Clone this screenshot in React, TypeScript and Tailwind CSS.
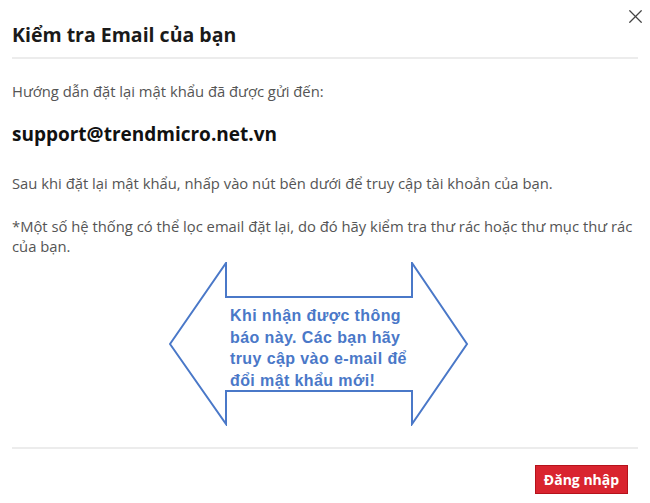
import { X } from "lucide-react";

function ArrowNote() {
    return (
        <div className="relative ml-[169px] mt-[6px] h-[164px] w-[300px]">
            <svg width="300" height="164" viewBox="0 0 300 164" className="block">
                <polygon
                    points="1,82 57,1 57,35 243,35 243,1 298,82 243,162 243,129 57,129 57,162"
                    fill="#ffffff"
                    stroke="#4a78c8"
                    strokeWidth="2"
                    strokeLinejoin="miter"
                />
            </svg>
            {/* callout text sits on top of the drawn arrow */}
            <p className="absolute left-[61px] top-[43px] whitespace-nowrap font-['Liberation_Sans',Arial,sans-serif] text-[16px] font-bold leading-[21.5px] tracking-[0.4px] text-[#4a78c8]">
                Khi nhận được thông
                <br />
                báo này. Các bạn hãy
                <br />
                truy cập vào e-mail để
                <br />
                đổi mật khẩu mới!
            </p>
        </div>
    );
}

export default function App() {
    return (
        <div className="relative h-[503px] w-[650px] bg-white font-['Open_Sans',sans-serif]">
            <button className="absolute right-[3px] top-[5px] text-[#444]">
                <X className="h-[23px] w-[23px]" strokeWidth={1.3} />
            </button>

            <div className="px-3 pt-[23px] pb-[10px]">
                <h1 className="text-[19.5px] font-bold leading-[24px] text-[#1a1a1a]">Kiểm tra Email của bạn</h1>
            </div>
            <div className="mx-3 border-t-2 border-[#ececec]" />

            <div className="px-3 pt-[22px] text-[14.8px] leading-[20px] text-[#555]">
                <p>Hướng dẫn đặt lại mật khẩu đã được gửi đến:</p>
                <p className="mt-[21px] text-[19px] font-bold leading-[24px] text-[#111]">support@trendmicro.net.vn</p>
                <p className="mt-[27px]">Sau khi đặt lại mật khẩu, nhấp vào nút bên dưới để truy cập tài khoản của bạn.</p>
                <p className="mt-[23px]">
                    *Một số hệ thống có thể lọc email đặt lại, do đó hãy kiểm tra thư rác hoặc thư mục thư rác của bạn.
                </p>
            </div>

            <ArrowNote />

            <div className="mx-3 mt-[21px] border-t-2 border-[#ececec]" />

            <div className="flex justify-end pr-[22px] pt-[16px]">
                <button className="flex h-[29px] w-[93px] items-center justify-center border border-[#b5121b] bg-[#d9242f] text-[14px] font-bold text-white">
                    Đăng nhập
                </button>
            </div>
        </div>
    );
}
